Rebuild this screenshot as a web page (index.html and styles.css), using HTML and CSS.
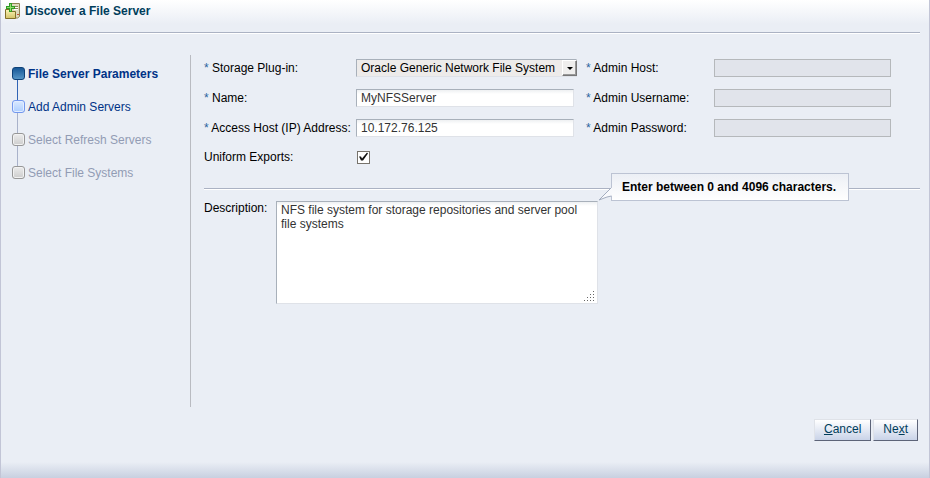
FILE: index.html
```html
<!DOCTYPE html>
<html lang="en">
<head>
<meta charset="utf-8">
<title>Discover a File Server</title>
<link rel="stylesheet" href="styles.css">
</head>
<body>
<form class="dialog">
  <header class="dialog-header">
    <svg class="title-icon" width="16" height="17" viewBox="0 0 16 17" aria-hidden="true">
      <defs>
        <linearGradient id="folder" x1="0" y1="0" x2="0" y2="1"><stop offset="0" stop-color="#fbf6b8"/><stop offset="1" stop-color="#d3c268"/></linearGradient>
      </defs>
      <path d="M6.500 .5h8v13l-2 1.500h-6z" fill="#dedabd" stroke="#8d8450"/>
      <path d="M9 3.500h4M9 5.500h4" stroke="#8c8658"/>
      <path d="M9 4.500h4M9 6.500h4" stroke="#fff"/>
      <path d="M12 11.500h2" stroke="#c4573a"/>
      <path d="M.5 15.500v-9h4l1 2h5v7z" fill="url(#folder)" stroke="#82702a"/>
      <path d="M4 0h3v3h3v3H7v3H4V6H1V3h3z" fill="#2f9a25"/>
      <path d="M5 1h1v3h3v1H6v3H5V5H2V4h3z" fill="#8ee26c"/>
    </svg>
    <h1 class="dialog-title">Discover a File Server</h1>
  </header>
  <div class="dialog-body">
    <nav class="steps" aria-label="Steps">
      <ol class="step-list">
        <li class="step step-current"><span class="step-box"></span>File Server Parameters</li>
        <li class="step step-next"><span class="step-box"></span><a href="#admin-servers">Add Admin Servers</a></li>
        <li class="step"><span class="step-box"></span>Select Refresh Servers</li>
        <li class="step"><span class="step-box"></span>Select File Systems</li>
      </ol>
    </nav>
    <main class="content">
      <div class="fields">
        <label for="plugin"><span class="req">*</span> Storage Plug-in:</label>
        <div class="select-wrap">
          <select id="plugin" class="select"><option>Oracle Generic Network File System</option></select>
          <span class="select-arrow"><svg width="6" height="3" viewBox="0 0 6 3" aria-hidden="true"><path d="M0 0h6L3 3z"/></svg></span>
        </div>
        <label for="host"><span class="req">*</span> Admin Host:</label>
        <input id="host" class="text" type="text" disabled>

        <label for="name"><span class="req">*</span> Name:</label>
        <input id="name" class="text" type="text" value="MyNFSServer">
        <label for="user"><span class="req">*</span> Admin Username:</label>
        <input id="user" class="text" type="text" disabled>

        <label for="address"><span class="req">*</span> Access Host (IP) Address:</label>
        <input id="address" class="text" type="text" value="10.172.76.125">
        <label for="password"><span class="req">*</span> Admin Password:</label>
        <input id="password" class="text" type="password" disabled>

        <label for="uniform">Uniform Exports:</label>
        <input id="uniform" class="check" type="checkbox" checked>
      </div>
      <div class="description">
        <label for="description">Description:</label>
        <div class="area-wrap">
          <textarea id="description" class="area" aria-describedby="hint">NFS file system for storage repositories and server pool file systems</textarea>
          <svg class="grip" width="11" height="11" viewBox="0 0 11 11" aria-hidden="true"><path d="M9 0h1v1H9zM6 3h1v1H6zM9 3h1v1H9zM3 6h1v1H3zM6 6h1v1H6zM9 6h1v1H9zM0 9h1v1H0zM3 9h1v1H3zM6 9h1v1H6zM9 9h1v1H9z" fill="#666"/></svg>
          <div id="hint" class="hint" role="tooltip">
            <svg class="hint-tail" width="14" height="14" viewBox="0 0 14 14" aria-hidden="true"><path d="M14 0L1 13l8-3 5-1z" fill="#f8f9fc"/><path d="M13.500 .5L1 13l8-3 4.500-1" fill="none" stroke="#a3adbf"/></svg>
            Enter between 0 and 4096 characters.
          </div>
        </div>
      </div>
    </main>
  </div>
  <footer class="dialog-footer">
    <button class="button" type="button" accesskey="c"><u>C</u>ancel</button>
    <button class="button" type="button" accesskey="x">Ne<u>x</u>t</button>
  </footer>
</form>
</body>
</html>
```
FILE: styles.css
```css
* {
  box-sizing: border-box;
}

body {
  margin: 0;
  font: 12px/14px "Liberation Sans", Arial, sans-serif;
  color: #000;
}

.dialog {
  display: flex;
  flex-direction: column;
  min-height: 100vh;
  border: solid #c2c5d6;
  border-width: 0 1px;
  background:
    linear-gradient(#eaeef5, #c8d0e0) bottom / 100% 16px no-repeat,
    linear-gradient(#fff, #eaeef5) top / 100% 24px no-repeat,
    #eaeef5;
}

.dialog-header {
  position: relative;
  display: flex;
  align-items: center;
  gap: 4px;
  height: 33px;
  margin: 0 9px 0 4px;
  padding-bottom: 11px;
}

.dialog-header::after {
  content: "";
  position: absolute;
  left: 5px;
  right: 0;
  bottom: 0;
  border-top: 1px solid #abb2c3;
  box-shadow: 0 1px #fff;
}

.dialog-title {
  margin: 0;
  font-size: 12px;
  color: #003d5b;
}

.dialog-body {
  display: flex;
  flex: 1;
  margin: 22px 9px 12px 11px;
}

.steps {
  flex: none;
  width: 179px;
  border-right: 1px solid #b9bbc1;
}

.step-list {
  display: grid;
  gap: 19px;
  margin: 0;
  padding: 12px 0 0;
  list-style: none;
}

.step {
  display: flex;
  align-items: flex-start;
  gap: 3px;
  color: #929cb4;
}

.step-box {
  position: relative;
  flex: none;
  width: 13px;
  height: 13px;
  border: 1px solid #979797;
  border-radius: 3px;
  background: linear-gradient(#ececec, #cdcdcd);
  box-shadow: inset 0 0 0 1px #f2f2f2;
}

.step:not(:last-child) .step-box::after {
  content: "";
  position: absolute;
  top: 12px;
  left: 4px;
  height: 20px;
  border-left: 1px solid #a9b2ca;
}

.step-current {
  font-weight: bold;
  color: #003286;
}

.step-current .step-box {
  border-color: #0e4178;
  background: linear-gradient(#175796, #5695c6);
  box-shadow: none;
}

.step-current:not(:last-child) .step-box::after {
  border-color: #3164b5;
}

.step-next .step-box {
  border-color: #7398ee;
  background: linear-gradient(#dbe9ff, #acceff);
  box-shadow: inset 0 0 0 1px #e3edff;
}

.step a {
  color: #003286;
  text-decoration: none;
}

.content {
  flex: 1;
  min-width: 0;
  padding: 4px 0 0 13px;
}

.fields {
  display: grid;
  grid-template-columns: 152px 230px 128px 177px;
  grid-template-rows: 18px 18px 18px 16px;
  row-gap: 12px;
  align-items: center;
  padding-bottom: 23px;
  border-bottom: 1px solid #abb2c3;
  box-shadow: 0 1px #fff;
}

.req {
  color: #2b629c;
}

.text,
.select,
.area {
  border: 1px solid #dfe2e8;
  border-top-color: #a8b0ba;
  border-left-color: #a8b0ba;
  border-radius: 0;
  margin: 0;
  font: inherit;
  color: #333;
  background: linear-gradient(#eef0f2, #fff 4px);
}

.text {
  width: 218px;
  height: 18px;
  padding: 0 4px;
}

.text:disabled {
  width: 177px;
  border-color: #b5b8bb;
  background: #e1e4eb;
}

.select-wrap {
  position: relative;
  width: 221px;
}

.select {
  display: block;
  appearance: none;
  width: 100%;
  height: 18px;
  padding: 0 4px;
  color: #000;
  background: #edebea;
}

.select-arrow {
  position: absolute;
  top: 1px;
  right: 0;
  display: grid;
  place-items: center;
  width: 15px;
  height: 16px;
  border: 1px solid #fff;
  border-right-color: #777;
  border-bottom-color: #777;
  box-shadow: inset -1px -1px #999;
  background: #efeeed;
  pointer-events: none;
}

.check {
  appearance: none;
  width: 13px;
  height: 13px;
  margin: 0 1px;
  border: 1px solid #77736c;
  background: #fff;
}

.check:checked::before {
  content: "";
  display: block;
  width: 11px;
  height: 11px;
  background: #111;
  clip-path: polygon(1px 5px, 3px 5px, 4px 7px, 9px 1px, 10px 2px, 5px 9px, 3px 9px);
}

.description {
  display: grid;
  grid-template-columns: 72px 322px;
  padding-top: 12px;
}

.area-wrap {
  position: relative;
}

.area {
  display: block;
  width: 100%;
  height: 103px;
  padding: 1px 4px;
  resize: none;
}

.grip {
  position: absolute;
  right: 3px;
  bottom: 2px;
}

.hint {
  position: absolute;
  left: 335px;
  bottom: 103px;
  padding: 6px 12px 6px 10px;
  border: 1px solid #bcc3d3;
  background: linear-gradient(#eceff5, #fff);
  font-weight: bold;
  white-space: nowrap;
}

.hint-tail {
  position: absolute;
  left: -14px;
  bottom: -1px;
}

.dialog-footer {
  display: flex;
  justify-content: flex-end;
  gap: 2px;
  padding: 0 11px 37px;
}

.button {
  height: 22px;
  padding: 0 9px 2px;
  border: 1px solid #dfe2e8;
  border-right-color: #5d6478;
  border-bottom-color: #5d6478;
  background: linear-gradient(#fff, #c9d3e8);
  font: inherit;
  color: #003d5b;
}
```
